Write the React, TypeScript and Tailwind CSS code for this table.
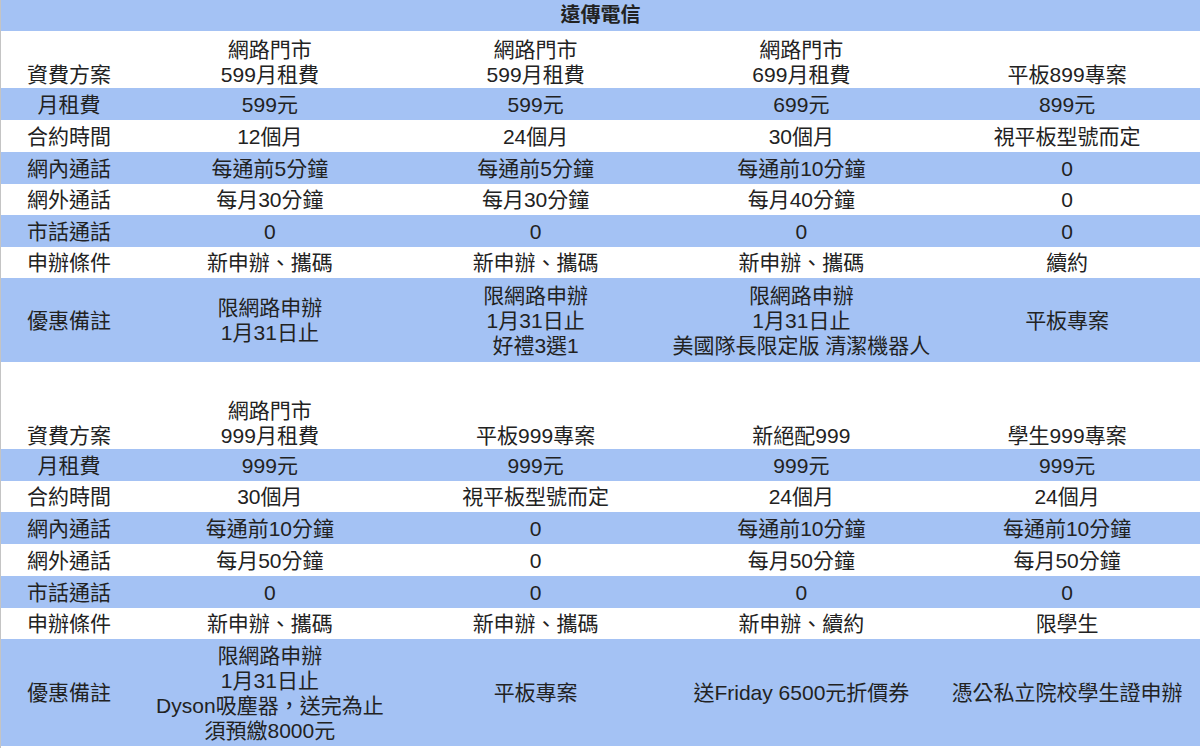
const font = { fontFamily: '"Liberation Sans", "Noto Sans CJK TC", sans-serif' };

type Row = { label: string; cells: string[]; blue: boolean; h: string; head?: boolean };

const table1: Row[] = [
  { label: "資費方案", cells: ["網路門市\n599月租費", "網路門市\n599月租費", "網路門市\n699月租費", "平板899專案"], blue: false, h: "h-[57px]", head: true },
  { label: "月租費", cells: ["599元", "599元", "699元", "899元"], blue: true, h: "h-[32px]" },
  { label: "合約時間", cells: ["12個月", "24個月", "30個月", "視平板型號而定"], blue: false, h: "h-[32px]" },
  { label: "網內通話", cells: ["每通前5分鐘", "每通前5分鐘", "每通前10分鐘", "0"], blue: true, h: "h-[32px]" },
  { label: "網外通話", cells: ["每月30分鐘", "每月30分鐘", "每月40分鐘", "0"], blue: false, h: "h-[31px]" },
  { label: "市話通話", cells: ["0", "0", "0", "0"], blue: true, h: "h-[32px]" },
  { label: "申辦條件", cells: ["新申辦、攜碼", "新申辦、攜碼", "新申辦、攜碼", "續約"], blue: false, h: "h-[31px]" },
  {
    label: "優惠備註",
    cells: ["限網路申辦\n1月31日止", "限網路申辦\n1月31日止\n好禮3選1", "限網路申辦\n1月31日止\n美國隊長限定版 清潔機器人", "平板專案"],
    blue: true,
    h: "h-[84px]",
  },
];

const table2: Row[] = [
  { label: "資費方案", cells: ["網路門市\n999月租費", "平板999專案", "新絕配999", "學生999專案"], blue: false, h: "h-[87px]", head: true },
  { label: "月租費", cells: ["999元", "999元", "999元", "999元"], blue: true, h: "h-[32px]" },
  { label: "合約時間", cells: ["30個月", "視平板型號而定", "24個月", "24個月"], blue: false, h: "h-[31px]" },
  { label: "網內通話", cells: ["每通前10分鐘", "0", "每通前10分鐘", "每通前10分鐘"], blue: true, h: "h-[32px]" },
  { label: "網外通話", cells: ["每月50分鐘", "0", "每月50分鐘", "每月50分鐘"], blue: false, h: "h-[32px]" },
  { label: "市話通話", cells: ["0", "0", "0", "0"], blue: true, h: "h-[32px]" },
  { label: "申辦條件", cells: ["新申辦、攜碼", "新申辦、攜碼", "新申辦、續約", "限學生"], blue: false, h: "h-[31px]" },
  {
    label: "優惠備註",
    cells: ["限網路申辦\n1月31日止\nDyson吸塵器，送完為止\n須預繳8000元", "平板專案", "送Friday 6500元折價券", "憑公私立院校學生證申辦"],
    blue: true,
    h: "h-[107px]",
  },
];

function TableRow({ row }: { row: Row }) {
  const align = row.head ? "items-end pb-px" : "items-center";
  return (
    <div className={`grid grid-cols-[136px_repeat(4,1fr)] ${row.h} ${row.blue ? "bg-[#a4c2f4]" : "bg-white"}`}>
      {[row.label, ...row.cells].map((c, i) => (
        <div key={i} className={`flex justify-center text-center whitespace-pre-line ${align}`}>
          {c}
        </div>
      ))}
    </div>
  );
}

export default function App() {
  return (
    <div className="w-[1200px] h-[748px] bg-white border-l border-[#c4c4c4] text-[21px] leading-[25px] text-[#222] overflow-hidden" style={font}>
      <div className="h-[31px] bg-[#a4c2f4] flex items-center justify-center font-bold text-[20px]">遠傳電信</div>
      {table1.map((r, i) => (
        <TableRow key={i} row={r} />
      ))}
      {table2.map((r, i) => (
        <TableRow key={i} row={r} />
      ))}
    </div>
  );
}
